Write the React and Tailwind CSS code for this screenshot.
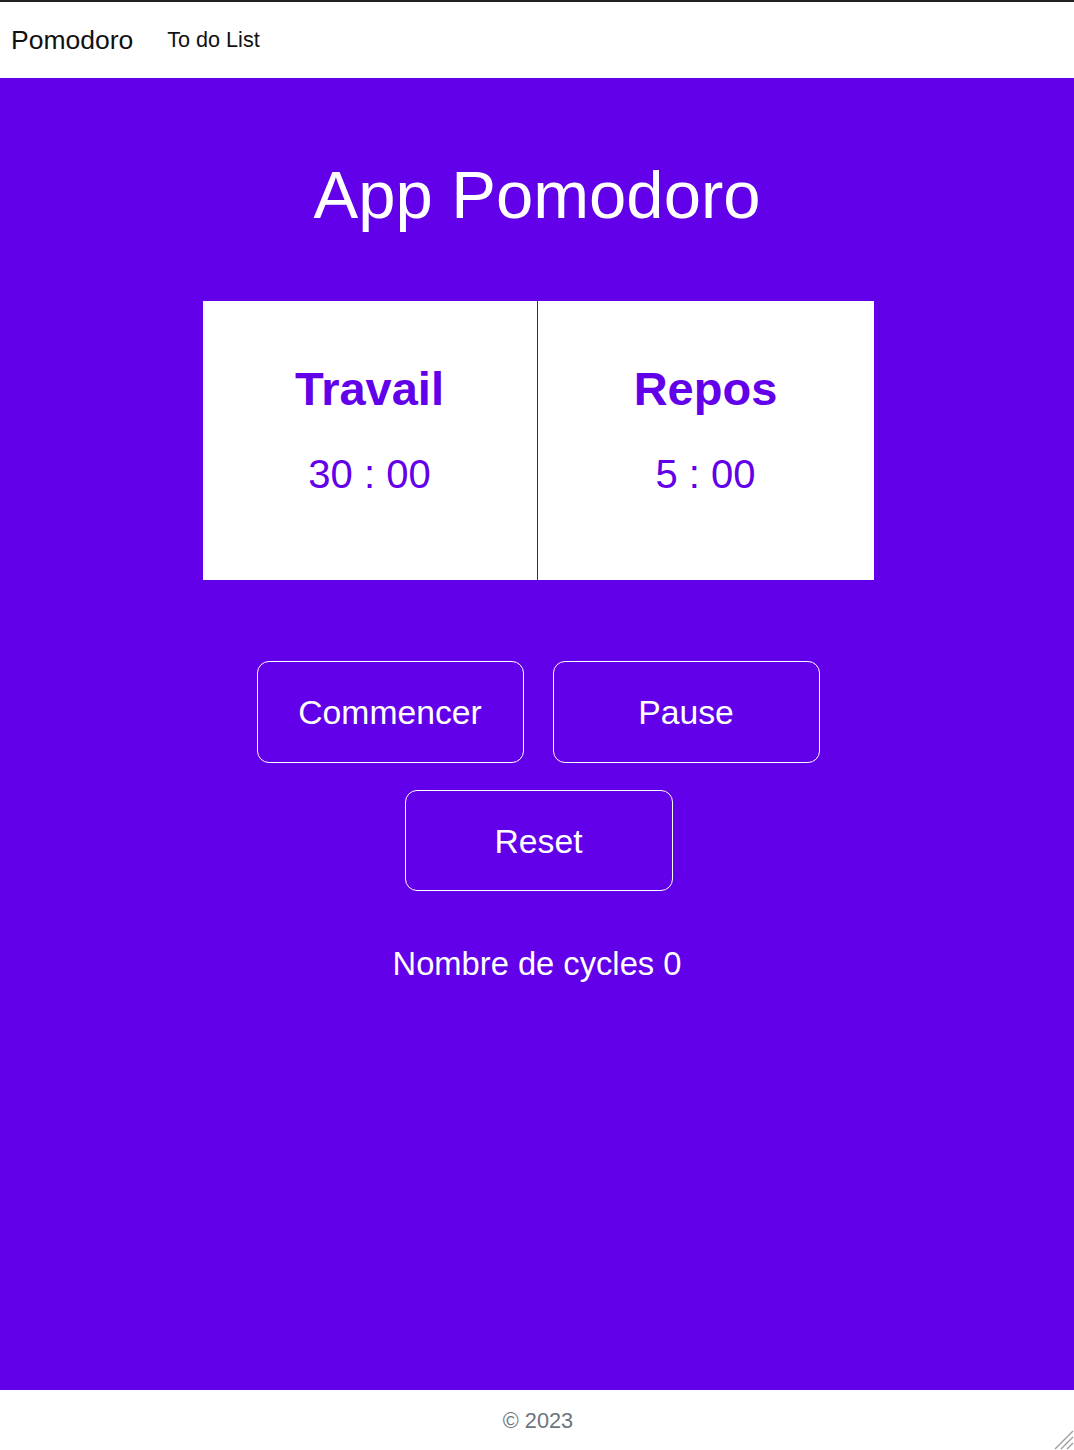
import React from "react";

export default function App() {
  const font = { fontFamily: '"Liberation Sans", Arial, sans-serif' };
  return (
    <div className="relative w-[1074px] h-[1450px] flex flex-col bg-white" style={font}>
      <nav className="h-[78px] border-t-2 border-[#222222] flex items-center bg-white shrink-0">
        <span className="ml-[11px] text-[26.5px] leading-[30px] text-[#111111]">Pomodoro</span>
        <span className="ml-[34px] text-[21.6px] leading-[30px] text-[#111111]">To do List</span>
      </nav>
      <main className="h-[1312px] bg-[#6200ea] flex flex-col items-center shrink-0">
        <h1 className="mt-[77px] text-[67px] leading-[80px] text-white font-normal">App Pomodoro</h1>
        <div className="mt-[66px] ml-[2px] flex w-[671px] h-[279px] bg-white">
          <div className="w-[335px] border-r border-[#333333] flex flex-col items-center pt-[61px]">
            <div className="text-[47px] leading-[54px] font-bold text-[#6200ea]">Travail</div>
            <div className="mt-[33px] text-[40px] leading-[50px] text-[#6200ea]">30 : 00</div>
          </div>
          <div className="flex-1 flex flex-col items-center pt-[61px]">
            <div className="text-[47px] leading-[54px] font-bold text-[#6200ea]">Repos</div>
            <div className="mt-[33px] text-[40px] leading-[50px] text-[#6200ea]">5 : 00</div>
          </div>
        </div>
        <div className="mt-[81px] ml-[2px] flex gap-[29px]">
          <button className="w-[267px] h-[102px] border border-white rounded-[12px] text-white text-[33.7px] leading-[40px]" style={font}>Commencer</button>
          <button className="w-[267px] h-[102px] border border-white rounded-[12px] text-white text-[33.7px] leading-[40px]" style={font}>Pause</button>
        </div>
        <button className="mt-[27px] ml-[3px] w-[268px] h-[101px] border border-white rounded-[12px] text-white text-[33.7px] leading-[40px]" style={font}>Reset</button>
        <p className="mt-[53px] text-[32.7px] leading-[40px] text-white">Nombre de cycles 0</p>
      </main>
      <footer className="h-[60px] flex items-center justify-center shrink-0 bg-white">
        <span className="ml-[2px] text-[21.7px] leading-[28px] text-[#6c757d] mt-[1px]">© 2023</span>
      </footer>
      <svg className="absolute right-0 bottom-0" width="22" height="22" viewBox="0 0 22 22">
        <line x1="21" y1="3" x2="3" y2="21" stroke="#a0a0a0" strokeWidth="1.5" />
        <line x1="21" y1="9" x2="9" y2="21" stroke="#a0a0a0" strokeWidth="1.5" />
        <line x1="21" y1="15" x2="15" y2="21" stroke="#a0a0a0" strokeWidth="1.5" />
      </svg>
    </div>
  );
}
